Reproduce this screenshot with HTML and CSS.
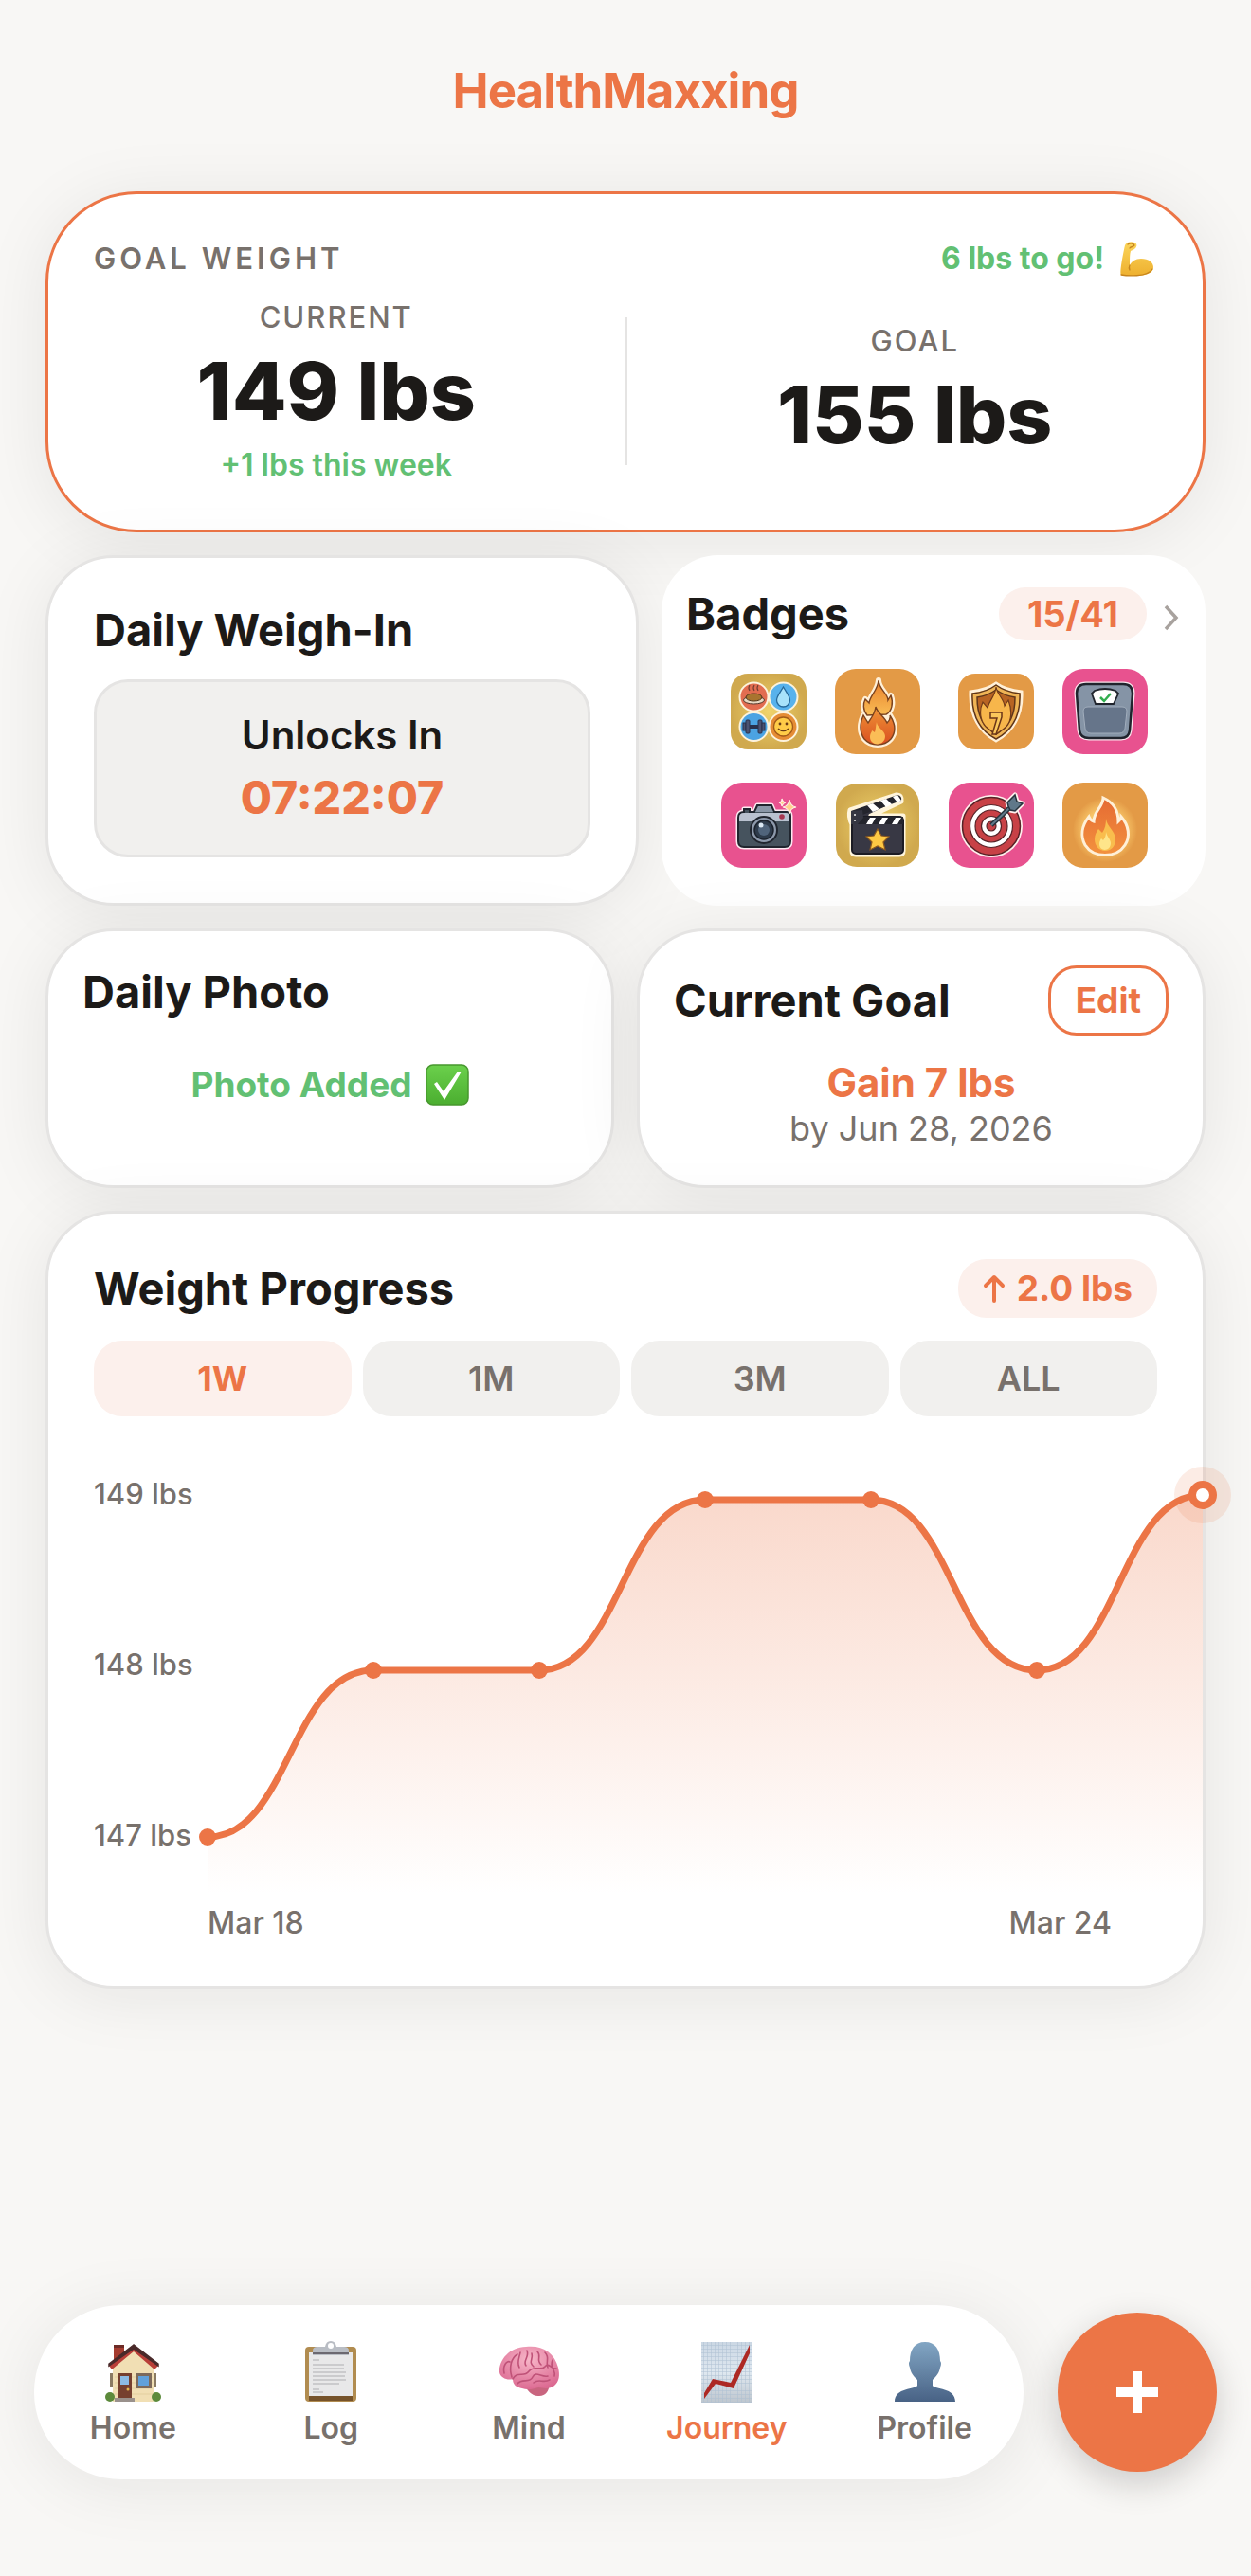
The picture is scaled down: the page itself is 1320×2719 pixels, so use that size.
FILE: index.html
```html
<!DOCTYPE html>
<html lang="en">
<head>
<meta charset="utf-8">
<meta name="viewport" content="width=device-width, initial-scale=1">
<title>HealthMaxxing – Journey</title>
<link rel="stylesheet" href="styles.css">
</head>
<body>
<header class="top"><h1 class="brand">HealthMaxxing</h1></header>

<main class="content">
  <section class="card goal">
    <div class="row">
      <h2 class="eyebrow">GOAL WEIGHT</h2>
      <p class="togo">6 lbs to go!
        <svg class="emoji-flex" viewBox="0 0 36 38" role="img" aria-label="flexed biceps">
          <defs><linearGradient id="skin" x1="0" y1="0" x2="0" y2="1"><stop offset="0" stop-color="#fbd55b"/><stop offset="1" stop-color="#eeb02f"/></linearGradient></defs>
          <path d="M6 5C7 2 12 0 16 2c3 1 3 4 1 6-2 2-4 2-5 3-1 3-1 8-1 15 2-4 6-7 12-7 8 0 13 4 13 9 0 6-7 9-19 9-6 0-12 0-15-1C0 34 4 14 6 5z" fill="url(#skin)"/>
          <path d="M9 4c3-2 6-1 7 1-1 2-4 1-5 3M11 26c-1 2-1 3 0 5M2 36c5 1 28 3 33-6" fill="none" stroke="#c6841d" stroke-width="1.3" stroke-linecap="round"/>
        </svg>
      </p>
    </div>
    <div class="stats">
      <div class="stat">
        <p class="stat-label">CURRENT</p>
        <p class="stat-value">149 lbs</p>
        <p class="stat-note">+1 lbs this week</p>
      </div>
      <div class="divider"></div>
      <div class="stat">
        <p class="stat-label">GOAL</p>
        <p class="stat-value">155 lbs</p>
      </div>
    </div>
  </section>

  <div class="pair pair-wide">
    <section class="card weigh">
      <h2 class="title">Daily Weigh-In</h2>
      <div class="lock">
        <p class="lock-label">Unlocks In</p>
        <p class="lock-time">07:22:07</p>
      </div>
    </section>

    <section class="badges">
      <div class="row">
        <h2 class="title">Badges</h2>
        <a class="badges-link" href="#badges" aria-label="15 of 41 badges">
          <span class="count">15/41</span>
          <svg class="chevron" viewBox="0 0 16 28"><path d="M2 2l11 12L2 26" fill="none" stroke="#a8a29e" stroke-width="3.5"/></svg>
        </a>
      </div>
      <div class="badge-grid">
        <svg class="badge small" viewBox="0 0 80 80" role="img" aria-label="All habits">
          <defs><radialGradient id="gold"><stop offset="0" stop-color="#f0d46c"/><stop offset="1" stop-color="#d0a94e"/></radialGradient></defs>
          <rect width="80" height="80" rx="18" fill="url(#gold)"/>
          <g stroke="#fdf3dd" stroke-width="2"><circle cx="24.500" cy="24.500" r="15" fill="#e26d50"/><circle cx="55.500" cy="24.500" r="15" fill="#58b2ec"/><circle cx="24.500" cy="56" r="15" fill="#4ba3e3"/><circle cx="55.500" cy="56" r="15" fill="#e58c35"/></g>
          <path d="M20 18q-2-3 0-6M25 18q-2-3 0-6M29 18q-2-3 0-6" fill="none" stroke="#733e32" stroke-width="1.200"/>
          <ellipse cx="24.500" cy="28" rx="11" ry="4" fill="#e8d9c2" stroke="#54382c"/><ellipse cx="24.500" cy="25" rx="8.500" ry="4" fill="#a8742f" stroke="#4c341b"/>
          <path d="M55.500 14c4 7 7 10 7 14a7 7 0 0 1-14 0c0-4 3-7 7-14z" fill="#a8e2fa" stroke="#27699a" stroke-width="1.300"/>
          <path d="M17 56h15" stroke="#28304c" stroke-width="4"/><g fill="#4b5272" stroke="#28304c" stroke-width="1"><rect x="13" y="52" width="3" height="8"/><rect x="16" y="49" width="4" height="14" rx="1"/><rect x="29" y="49" width="4" height="14" rx="1"/><rect x="33" y="52" width="3" height="8"/></g>
          <circle cx="55.500" cy="56" r="10" fill="#ffcc48" stroke="#a25a19" stroke-width="1.300"/><circle cx="52" cy="53" r="1.400" fill="#6a3b16"/><circle cx="59" cy="53" r="1.400" fill="#6a3b16"/><path d="M50 58q5.500 5 11 0" fill="none" stroke="#6a3b16" stroke-width="1.400"/>
        </svg>
        <svg class="badge" viewBox="0 0 90 90" role="img" aria-label="Double flame">
          <defs><linearGradient id="flameA" x1="0" y1="0" x2="0" y2="1"><stop offset="0" stop-color="#e9802c"/><stop offset="1" stop-color="#f9bd55"/></linearGradient><linearGradient id="flameB" x1="0" y1="0" x2="0" y2="1"><stop offset="0" stop-color="#f09637"/><stop offset="1" stop-color="#d94e20"/></linearGradient></defs>
          <rect width="90" height="90" rx="22" fill="#e39a46"/>
          <path d="M46 12c0 9 10 14 10 21l3-5c3 8 1 17-5 20l4 1c6 9 7 17 1 25-7 8-21 8-28 0-5-7-5-16-1-25l4 0c-5-6-4-13-2-17l4 4c1-8 9-13 10-24z" fill="#fff0d8" stroke="#fff0d8" stroke-width="6" stroke-linejoin="round"/>
          <path d="M46 12c0 9 10 14 10 21l3-5c3 8 1 17-5 20l-20 1c-5-6-4-13-2-17l4 4c1-8 9-13 10-24z" fill="url(#flameA)" stroke="#7b421e" stroke-width="1.400"/>
          <path d="M43 40c2 7 9 10 12 17 2-2 4-5 3-8 6 9 7 17 1 25-7 8-21 8-28 0-5-7-5-16-1-25l5 8c3-5 7-9 8-17z" fill="url(#flameB)" stroke="#7b421e" stroke-width="1.400"/>
          <path d="M44 56c0 6 9 9 9 15 0 11-16 11-16 1 0-4 2-5 2-7l3 2c1-3 1-7 2-11z" fill="#fbbd56"/>
        </svg>
        <svg class="badge small" viewBox="0 0 80 80" role="img" aria-label="Seven day shield">
          <rect width="80" height="80" rx="18" fill="#e39a46"/>
          <path d="M40 10c8 6 17 8 27 9 1 24-7 41-27 52C20 60 12 43 13 19c10-1 19-3 27-9z" fill="#f2bc60" stroke="#fff0d8" stroke-width="3"/>
          <path d="M40 12c8 6 16 8 25 9 1 22-6 38-25 48C21 59 14 43 15 21c9-1 17-3 25-9z" fill="#efb455" stroke="#5e351a" stroke-width="1.500"/>
          <path d="M40 17c7 5 13 7 20 8 0 18-5 30-20 39-15-9-20-21-20-39 7-1 13-3 20-8z" fill="#b86423" stroke="#5e351a" stroke-width="1.500"/>
          <path d="M40 14c1 8 8 12 9 20l4-6c5 13 3 26-6 31l-7 5-7-5c-9-5-12-18-7-29l5 6c2-8 8-12 9-22z" fill="#f7b64b" stroke="#713b19" stroke-width="1.200"/>
          <path d="M34 41h12v5l-6 18h-4l5-17h-7z" fill="#fac75b" stroke="#6a3518" stroke-width="1.500"/>
        </svg>
        <svg class="badge" viewBox="0 0 90 90" role="img" aria-label="Scale">
          <rect width="90" height="90" rx="22" fill="#e8528f"/>
          <path d="M25 16h39q10 0 10 10l-3 39q-1 8-9 8H28q-9 0-10-8l-3-39q0-10 10-10z" fill="#8594a6" stroke="#fbe6ee" stroke-width="5"/>
          <path d="M25 16h39q10 0 10 10l-3 39q-1 8-9 8H28q-9 0-10-8l-3-39q0-10 10-10z" fill="#8594a6" stroke="#20242d" stroke-width="2.500"/>
          <path d="M27 40h36q5 0 5 5l-2 18q-1 5-6 5H30q-5 0-6-5l-2-18q0-5 5-5z" fill="#66758a" stroke="#a1adbc" stroke-width="1"/>
          <path d="M34 23q11-4 22 0l3 3-5 11H35l-4-11z" fill="#fff" stroke="#20242d" stroke-width="1.800"/>
          <path d="M40 30l4 4 7-8" fill="none" stroke="#32ad4f" stroke-width="2.500"/>
        </svg>
        <svg class="badge" viewBox="0 0 90 90" role="img" aria-label="Camera">
          <rect width="90" height="90" rx="22" fill="#e8528f"/>
          <path d="M24 31v-3h6v3h5l3-7h15l3 7h13q4 0 4 4v27q0 6-6 6H24q-6 0-6-6V37q0-6 6-6z" fill="#3f4b57" stroke="#fde9f1" stroke-width="5" stroke-linejoin="round"/>
          <path d="M24 31v-3h6v3h5l3-7h15l3 7h13q4 0 4 4v27q0 6-6 6H24q-6 0-6-6V37q0-6 6-6z" fill="#46535e" stroke="#20252e" stroke-width="2"/>
          <path d="M19 41v-4q0-5 5-5h44q4 0 4 4v5z" fill="#b9c1cf"/><path d="M36 31l3-6h13l3 6z" fill="#8a97a7"/>
          <circle cx="45" cy="50" r="14" fill="#8d99ab" stroke="#20252e" stroke-width="2"/><circle cx="45" cy="50" r="10" fill="#2e3b4b" stroke="#1b222c" stroke-width="1.500"/><circle cx="45" cy="50" r="6" fill="#50647b"/><circle cx="42" cy="45" r="2.500" fill="#dbe8f3"/><circle cx="64" cy="36" r="2.800" fill="#a73750"/>
          <path d="M72 18q1 7 7 8-6 1-7 7-1-6-7-7 6-1 7-8zM64 17q1 4 4 4-3 1-4 4 0-3-3-4 3 0 3-4z" fill="#ffcf8e" stroke="#fff0e4" stroke-width="1.200"/>
        </svg>
        <svg class="badge" viewBox="0 0 90 90" role="img" aria-label="Clapperboard">
          <rect x="1" y="1" width="88" height="88" rx="22" fill="url(#gold)"/>
          <path d="M16 29l49-16q6 0 5 7L38 35h34v37q0 4-4 4H22q-4 0-4-4V44q-4-8-2-15z" fill="#343440" stroke="#fff5dc" stroke-width="5" stroke-linejoin="round"/>
          <path d="M17 30l49-17q5 1 4 6L29 34z" fill="#24252d"/>
          <path d="M34 24l6 7 7-3-7-6zM48 19l6 7 6-3-6-6zM61 15l5 6 4-2-4-6z" fill="#fff"/>
          <rect x="18" y="36" width="54" height="39" rx="4" fill="#383844" stroke="#1c1c24" stroke-width="2"/><path d="M18 36h54v8H18z" fill="#24252d"/><path d="M37 37h6l-4 7h-6zM50 37h6l-4 7h-6zM64 37h6l-4 7h-6z" fill="#fff"/><path d="M17 30l12-1 1 8-6 7h-7z" fill="#353641"/><circle cx="21" cy="34" r="1" fill="#eee"/><circle cx="21" cy="40" r="1" fill="#eee"/>
          <path d="M45 49l4 7 8 1-6 6 2 8-8-4-8 4 2-8-6-6 8-1z" fill="#fdc944" stroke="#8a571f" stroke-width="1.200"/>
        </svg>
        <svg class="badge" viewBox="0 0 90 90" role="img" aria-label="Target">
          <rect width="90" height="90" rx="22" fill="#e8528f"/>
          <circle cx="45" cy="46" r="33" fill="#fff0ed"/><circle cx="45" cy="46" r="30.500" fill="#c84146" stroke="#562227" stroke-width="1.500"/><circle cx="45" cy="46" r="22.500" fill="#fff" stroke="#562227" stroke-width="1.200"/><circle cx="45" cy="46" r="17" fill="#c84146" stroke="#562227" stroke-width="1.200"/><circle cx="45" cy="46" r="10.500" fill="#fff" stroke="#562227" stroke-width="1.200"/><circle cx="45" cy="46" r="5" fill="#c84146" stroke="#562227" stroke-width="1.200"/>
          <path d="M63 25l-1-4 8-8 2 7 6 2-8 8-5-1z" fill="#607889" stroke="#fff0ed" stroke-width="5" stroke-linejoin="round"/>
          <path d="M45 45l19-18" stroke="#26333c" stroke-width="5"/><path d="M45 45l19-18" stroke="#607889" stroke-width="2"/>
          <path d="M63 25l-1-4 8-8 2 7 6 2-8 8-5-1z" fill="#607889" stroke="#26333c" stroke-width="1.500"/>
        </svg>
        <svg class="badge" viewBox="0 0 90 90" role="img" aria-label="Flame">
          <defs><radialGradient id="glow"><stop offset=".6" stop-color="#f8c568"/><stop offset="1" stop-color="#e39a46"/></radialGradient><linearGradient id="flameC" x1="0" y1="0" x2="0" y2="1"><stop offset="0" stop-color="#e56a33"/><stop offset="1" stop-color="#f3923e"/></linearGradient></defs>
          <rect width="90" height="90" rx="22" fill="#e39a46"/><circle cx="45" cy="50" r="34" fill="url(#glow)"/>
          <path d="M43 16c11 5 16 14 16 25 2-2 3-3 3-5 8 9 10 21 4 30-9 14-33 14-42 0-5-9-4-20 4-30 1 3 2 4 5 5 0-11 10-15 10-25z" fill="url(#flameC)" stroke="#fff0d8" stroke-width="3"/>
          <path d="M46 38c1 9 10 13 10 22 0 8-5 12-11 12s-11-5-11-12c0-5 2-8 4-11l4 4c3-4 4-9 4-15z" fill="#f9bd4d"/><path d="M46 52c1 5 5 8 5 12 0 9-12 9-12 1 0-3 1-4 2-6l2 2c2-3 3-5 3-9z" fill="#fee58a"/>
        </svg>
      </div>
    </section>
  </div>

  <div class="pair">
    <section class="card compact">
      <h2 class="title">Daily Photo</h2>
      <p class="added">Photo Added
        <svg class="emoji-check" viewBox="0 0 46 44" role="img" aria-label="done"><defs><linearGradient id="ok" x1="0" y1="0" x2="0" y2="1"><stop offset="0" stop-color="#6bd04c"/><stop offset="1" stop-color="#4bae30"/></linearGradient></defs><rect x="1" y="1" width="44" height="42" rx="7" fill="url(#ok)" stroke="#47982e" stroke-width="1.500"/><path d="M9 21l3-2 7 10L34 8h4L20 38z" fill="#fff"/></svg>
      </p>
    </section>
    <section class="card compact">
      <div class="row">
        <h2 class="title">Current Goal</h2>
        <button class="edit" type="button">Edit</button>
      </div>
      <p class="target">Gain 7 lbs</p>
      <p class="deadline">by Jun 28, 2026</p>
    </section>
  </div>

  <section class="card progress">
    <div class="row">
      <h2 class="title">Weight Progress</h2>
      <p class="delta"><svg class="arrow" viewBox="0 0 24 30" aria-hidden="true"><path d="M12 28V4M3 12l9-9 9 9" fill="none" stroke="currentColor" stroke-width="4" stroke-linecap="round" stroke-linejoin="round"/></svg>2.0 lbs</p>
    </div>
    <div class="ranges">
      <button class="range active" type="button" aria-pressed="true">1W</button>
      <button class="range" type="button">1M</button>
      <button class="range" type="button">3M</button>
      <button class="range" type="button">ALL</button>
    </div>
    <div class="chart">
      <div class="y-axis"><span>149 lbs</span><span>148 lbs</span><span>147 lbs</span></div>
      <svg class="plot" viewBox="0 0 1050 448" role="img" aria-label="Weight from Mar 18 to Mar 24">
        <defs><linearGradient id="area" gradientUnits="userSpaceOnUse" x1="0" y1="26" x2="0" y2="448"><stop offset="0" stop-color="#ec7546" stop-opacity=".28"/><stop offset="1" stop-color="#ec7546" stop-opacity="0"/></linearGradient></defs>
        <path fill="url(#area)" d="M0 387C87 387 87 211 175 211H350C437 211 437 31 525 31H700C787 31 787 211 875 211C962 211 962 26 1050 26V448H0z"/>
        <path fill="none" stroke="#ec7546" stroke-width="7" d="M0 387C87 387 87 211 175 211H350C437 211 437 31 525 31H700C787 31 787 211 875 211C962 211 962 26 1050 26"/>
        <g fill="#ec7546"><circle cx="0" cy="387" r="9"/><circle cx="175" cy="211" r="9"/><circle cx="350" cy="211" r="9"/><circle cx="525" cy="31" r="9"/><circle cx="700" cy="31" r="9"/><circle cx="875" cy="211" r="9"/><circle cx="1050" cy="26" r="30" opacity=".14"/></g>
        <circle cx="1050" cy="26" r="11" fill="#fff" stroke="#ec7546" stroke-width="8"/>
      </svg>
      <div class="x-axis"><span>Mar 18</span><span>Mar 24</span></div>
    </div>
  </section>
</main>

<footer class="dock">
  <nav class="tabs">
    <a class="tab" href="#home">
      <svg class="tab-icon" viewBox="0 0 66 66"><path d="M13 22V4h11v10" fill="#a53c30"/><path d="M13 4h11v3H13z" fill="#6d2b26"/><path d="M9 34h3v14H9zM55 34h3v14h-3z" fill="#8a7a62"/><path d="M12 28L34 8l22 20v36H12z" fill="#f1dfb4"/><path d="M14 38h40M14 44h40M14 50h40M14 56h40" stroke="#e3cf9f" stroke-width="1"/><path d="M34 5L8 26l3 4L34 11l22 19 4-4z" fill="#b93f38"/><path d="M34 4L8 24v2L34 8l26 18v-2z" fill="#4a2a2a" stroke="#4a2a2a" stroke-width="1.500"/><rect x="17" y="34" width="15" height="27" fill="#76402f"/><rect x="20" y="37" width="9" height="9" fill="#8cbbe3"/><circle cx="28" cy="51" r="1.500" fill="#e3b64a"/><rect x="36" y="34" width="17" height="16" fill="#7d6a5b"/><rect x="39" y="37" width="11" height="10" fill="#61a1da"/><circle cx="9" cy="59" r="5" fill="#5c8a3b"/><circle cx="58" cy="59" r="5" fill="#5c8a3b"/><rect x="14" y="60" width="21" height="4" fill="#9a918c"/></svg>
      Home</a>
    <a class="tab" href="#log">
      <svg class="tab-icon" viewBox="0 0 66 66"><rect x="6" y="6" width="54" height="58" rx="4" fill="#b18c50"/><path d="M10 58h46v5H10z" fill="#76532b"/><path d="M10 12h46v46H10z" fill="#e8e8e9"/><path d="M14 15V10q0-4 5-4h8q1-6 6-6t6 6h8q5 0 5 4v5z" fill="#b9bdc4"/><path d="M14 12h38v2H14z" fill="#6b6870"/><circle cx="33" cy="5" r="3" fill="#fff"/><path d="M14 20h7M14 25h33M14 29h33M14 33h35M14 37h34M14 41h35M14 45h28M14 51h7M14 54h11" stroke="#cbcbcd" stroke-width="2"/></svg>
      Log</a>
    <a class="tab" href="#mind">
      <svg class="tab-icon" viewBox="0 0 66 66"><defs><radialGradient id="brain" cx=".5" cy=".3" r=".7"><stop offset="0" stop-color="#f7b6c8"/><stop offset="1" stop-color="#dc6a92"/></radialGradient></defs><path d="M28 46c3 6 9 13 16 12 7 0 10-5 11-13z" fill="#c9657f"/><path d="M2 33C1 20 13 6 30 6c17-2 30 6 34 22 2 8 1 15-4 19-5 4-11 3-17 2-6 2-12 3-17 1-6-1-10-4-10-10-5 2-13-1-14-7z" fill="url(#brain)"/><path d="M7 34c-2-8 3-14 6-12M15 38c-3-10-1-20 6-24M23 28c-3-5 0-11 1-16M30 26c-4-5 4-9 1-16M38 27c-6-5 0-8-2-14M42 11c5 5-2 9 4 14M50 12c6 6 0 10 3 16M58 20c-4 8 4 10 2 17M16 40c5-9 12-1 17-8s13 0 17-5 7 3 12 2M21 45c5-6 13 0 16-7s10 1 16-1M38 44c6-5 10 1 17-3" fill="none" stroke="#bf5278" stroke-width="1.600" stroke-linecap="round"/></svg>
      Mind</a>
    <a class="tab active" href="#journey" aria-current="page">
      <svg class="tab-icon" viewBox="0 0 66 66"><defs><linearGradient id="paper" x1="0" y1="0" x2="0" y2="1"><stop offset="0" stop-color="#cbd7e4"/><stop offset=".5" stop-color="#dfe8f0"/><stop offset="1" stop-color="#bec6ce"/></linearGradient><pattern id="squares" width="4" height="4" patternUnits="userSpaceOnUse"><path d="M0 0H4M0 0V4" stroke="#adc0d2" stroke-width="1"/></pattern></defs><path d="M6 1h54v64H6z" fill="url(#paper)"/><path d="M6 1h54v64H6z" fill="url(#squares)"/><path d="M9 55v6l12-16 19 5L57 13V4L37 44l-19-4z" fill="#ad2924"/></svg>
      Journey</a>
    <a class="tab" href="#profile">
      <svg class="tab-icon" viewBox="0 0 66 66"><defs><linearGradient id="bust" x1="0" y1="0" x2="0" y2="1"><stop offset="0" stop-color="#82a6c4"/><stop offset="1" stop-color="#486285"/></linearGradient></defs><path d="M33 1c11 0 16 8 16 20q2 2 0 7c-1 6-4 9-8 13v6c2 4 24 2 24 17H1c0-15 22-13 24-17v-6c-4-4-7-7-8-13q-2-5 0-7C17 9 22 1 33 1z" fill="url(#bust)"/></svg>
      Profile</a>
  </nav>
  <button class="fab" type="button" aria-label="Add"><svg class="plus" viewBox="0 0 46 46"><path d="M23 1v44M1 23h44" stroke="#fff" stroke-width="10"/></svg></button>
</footer>
</body>
</html>
```

FILE: styles.css
```css
:root {
  --accent: #ec7546;
  --accent-soft: #fcf0ec;
  --ink: #1c1a18;
  --muted: #78716c;
  --green: #62c073;
  --line: #e5e4e3;
  --fill: #f1f0ee;
}

* { box-sizing: border-box; margin: 0; padding: 0; }

body {
  display: flex;
  flex-direction: column;
  min-height: 100vh;
  background: #f8f7f5;
  color: var(--ink);
  font-family: Inter, "Liberation Sans", sans-serif;
  font-size: 36px;
  line-height: 48px;
}

button { font: inherit; cursor: pointer; }
a { color: inherit; text-decoration: none; }
svg { display: block; flex: none; overflow: visible; }

.top { padding: 66px 48px 76px; text-align: center; }
.brand {
  color: var(--accent);
  font-size: 51px;
  font-weight: 700;
  line-height: 60px;
  letter-spacing: -1px;
}

.content { display: flex; flex-direction: column; gap: 24px; padding: 0 48px; }

.card {
  background: #fff;
  border: 3px solid var(--line);
  border-radius: 72px;
  padding: 48px;
  box-shadow: 0 8px 72px rgba(28, 26, 24, .08);
}
.compact { padding: 36px; }
.row { display: flex; align-items: center; justify-content: space-between; }
.title { font-size: 47px; font-weight: 700; line-height: 56px; }

.goal { border-color: var(--accent); border-radius: 96px; }
.eyebrow { color: var(--muted); font-size: 31px; font-weight: 600; line-height: 40px; letter-spacing: 4px; }
.togo {
  display: flex;
  align-items: center;
  gap: 16px;
  padding-right: 4px;
  color: var(--green);
  font-size: 32px;
  font-weight: 700;
  line-height: 40px;
}
.emoji-flex { width: 36px; height: 38px; }

.stats { display: grid; grid-template-columns: 1fr 3px 1fr; gap: 48px; align-items: center; margin-top: 22px; }
.stat { display: flex; flex-direction: column; gap: 10px; text-align: center; }
.stat-label { color: var(--muted); font-size: 31px; font-weight: 500; line-height: 40px; letter-spacing: 2px; }
.stat-value { font-size: 84px; font-weight: 800; line-height: 96px; }
.stat-note { color: var(--green); font-size: 32px; font-weight: 600; line-height: 40px; }
.divider { height: 156px; background: var(--line); }

.pair { display: grid; grid-template-columns: 1fr 1fr; gap: 24px; }
.pair-wide { grid-template-columns: 12fr 11fr; }

.lock {
  display: flex;
  flex-direction: column;
  gap: 14px;
  margin-top: 24px;
  padding: 32px;
  background: var(--fill);
  border: 3px solid var(--line);
  border-radius: 36px;
  text-align: center;
}
.lock-label { font-size: 42px; font-weight: 600; }
.lock-time { color: var(--accent); font-size: 48px; font-weight: 800; line-height: 56px; }

.badges { padding: 34px 24px 34px 26px; background: #fff; border-radius: 60px; }
.badges-link { display: flex; align-items: center; gap: 18px; }
.count {
  padding: 4px 30px;
  background: var(--accent-soft);
  border-radius: 28px;
  color: var(--accent);
  font-size: 38px;
  font-weight: 700;
}
.chevron { width: 16px; height: 28px; margin: 8px 4px 0 0; }
.badge-grid { display: grid; grid-template-columns: repeat(4, 90px); gap: 30px; justify-content: center; align-items: center; margin-top: 30px; }
.badge { width: 90px; height: 90px; }
.small { width: 80px; height: 80px; justify-self: end; }

.added {
  display: flex;
  align-items: center;
  justify-content: center;
  gap: 14px;
  margin-top: 46px;
  color: var(--green);
  font-size: 37px;
  font-weight: 700;
}
.emoji-check { width: 46px; height: 44px; }

.edit {
  padding: 10px 26px;
  border: 3px solid var(--accent);
  border-radius: 30px;
  background: #fff;
  color: var(--accent);
  font-size: 37px;
  font-weight: 700;
}
.target { margin-top: 26px; color: var(--accent); font-size: 42px; font-weight: 700; text-align: center; }
.deadline { color: var(--muted); text-align: center; }

.delta {
  display: flex;
  align-items: center;
  gap: 12px;
  padding: 7px 26px;
  background: var(--accent-soft);
  border-radius: 30px;
  color: var(--accent);
  font-size: 37px;
  font-weight: 700;
}
.arrow { width: 24px; height: 30px; }

.ranges { display: grid; grid-template-columns: repeat(4, 1fr); gap: 12px; margin-top: 24px; }
.range { height: 80px; border: 0; border-radius: 30px; background: var(--fill); color: var(--muted); font-weight: 600; }
.range.active { background: var(--accent-soft); color: var(--accent); font-weight: 700; }

.chart {
  display: grid;
  grid-template-columns: 120px 1fr;
  row-gap: 12px;
  margin-top: 57px;
  color: var(--muted);
  font-size: 31px;
  font-weight: 500;
  line-height: 36px;
}
.y-axis { display: flex; flex-direction: column; justify-content: space-between; padding: 7px 0 45px; }
.plot { width: calc(100% + 48px); }
.x-axis { grid-column: 2; display: flex; justify-content: space-between; padding-right: 48px; font-size: 32px; }

.dock { display: flex; align-items: center; gap: 36px; margin-top: auto; padding: 48px 36px 102px; }
.tabs {
  flex: 1;
  display: grid;
  grid-template-columns: repeat(5, 1fr);
  padding: 38px 0 34px;
  background: #fff;
  border-radius: 92px;
  box-shadow: 0 8px 72px rgba(28, 26, 24, .08);
}
.tab {
  display: flex;
  flex-direction: column;
  align-items: center;
  gap: 6px;
  color: var(--muted);
  font-size: 32px;
  font-weight: 600;
  line-height: 40px;
}
.tab.active { color: var(--accent); }
.tab-icon { width: 66px; height: 66px; }
.fab {
  display: grid;
  place-items: center;
  width: 168px;
  height: 168px;
  border: 0;
  border-radius: 50%;
  background: var(--accent);
  box-shadow: 0 12px 36px rgba(28, 26, 24, .2);
}
.plus { width: 46px; height: 46px; }
```
